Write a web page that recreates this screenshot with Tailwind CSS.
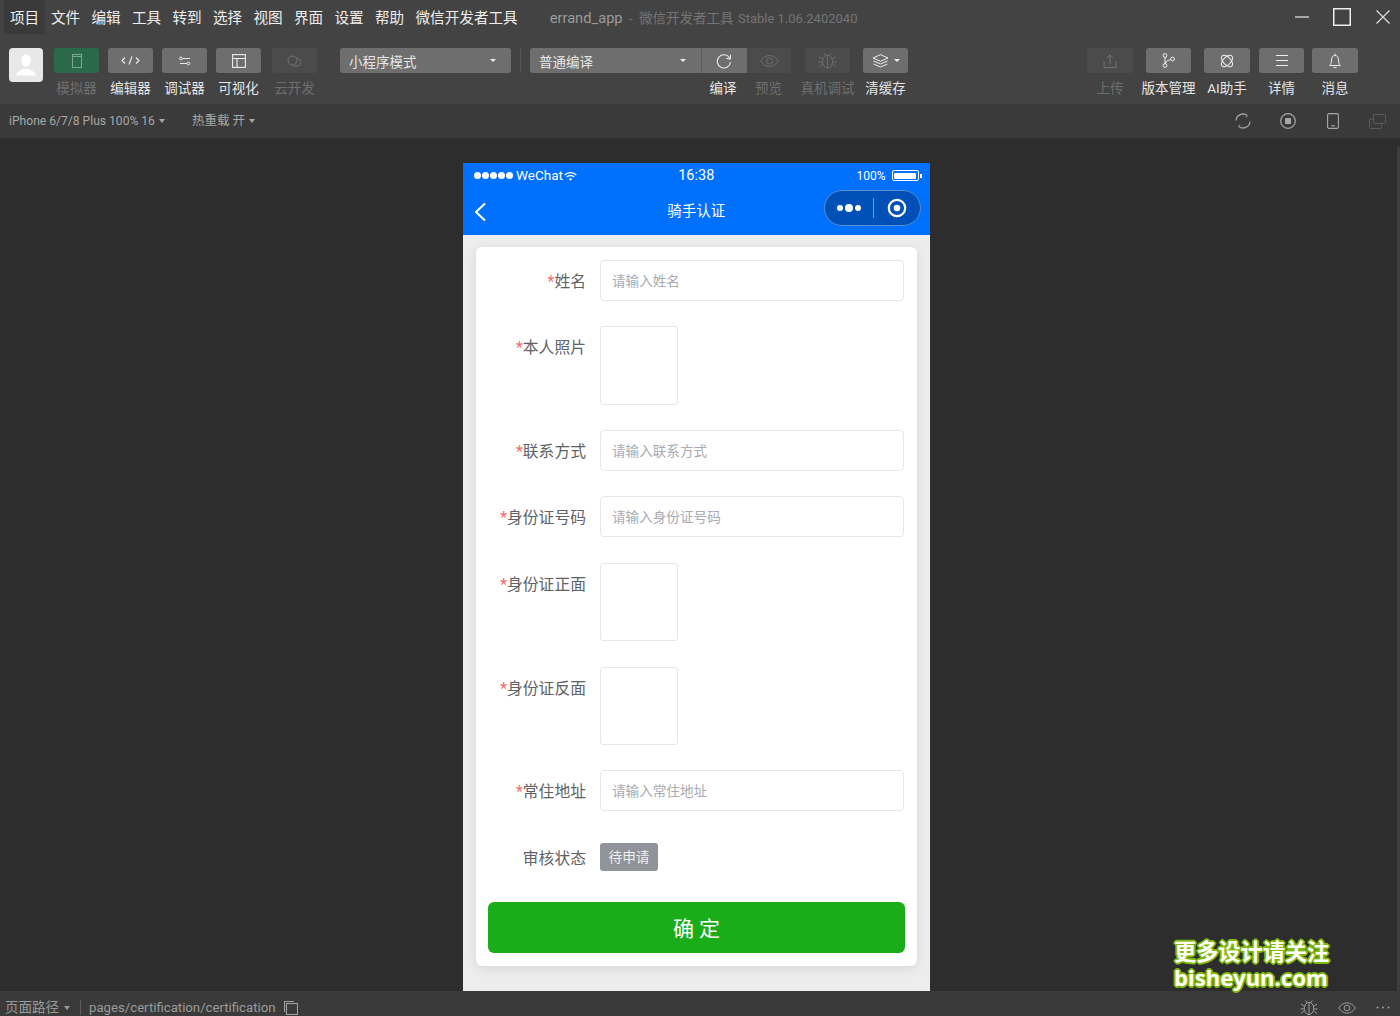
<!DOCTYPE html>
<html lang="zh">
<head>
<meta charset="utf-8">
<title>微信开发者工具</title>
<script src="https://cdn.jsdelivr.net/npm/@tailwindcss/browser@4"></script>
</head>
<body class="m-0 bg-[#2d2d2d]">
<div class="relative flex flex-col w-[1400px] h-[1016px] overflow-hidden bg-[#2d2d2d] font-['Roboto','Noto_Sans_CJK_SC',sans-serif]">

  <!-- top -->
  <header class="h-[104px] shrink-0 bg-[#434343]">
    <div class="flex items-center h-[34px] pl-[4px] text-[14.6px] text-[#efefef]">
      <div class="flex items-center justify-center w-[41px] h-[34px] pt-[3px] bg-[#3a3a3a]">项目</div>
      <div class="flex items-center gap-[11.3px] ml-[6px] pt-[3px]">
        <span>文件</span><span>编辑</span><span>工具</span><span>转到</span><span>选择</span><span>视图</span><span>界面</span><span>设置</span><span>帮助</span><span>微信开发者工具</span>
      </div>
      <div class="ml-[32px] pt-[2px] text-[#9a9a9a] text-[14.7px] whitespace-nowrap">errand_app</div>
      <div class="ml-[6px] pt-[2px] text-[#757575] text-[13.5px] whitespace-nowrap">-&nbsp; 微信开发者工具 <span class="ml-[1px] text-[13px]">Stable 1.06.2402040</span></div>
      <div class="ml-auto flex items-center h-[34px]">
        <svg class="w-[14px] h-[14px] mr-[24px]" viewBox="0 0 14 14"><path d="M0 7h14" stroke="#ddd" stroke-width="1.3"/></svg>
        <svg class="w-[18px] h-[18px] mr-[25px]" viewBox="0 0 18 18"><rect x=".75" y=".75" width="16.5" height="16.5" fill="none" stroke="#eee" stroke-width="1.5"/></svg>
        <svg class="w-[14px] h-[14px] mr-[10px]" viewBox="0 0 14 14"><path d="M.5.5l13 13M13.5.5l-13 13" stroke="#ddd" stroke-width="1.2"/></svg>
      </div>
    </div>

    <div class="flex items-start h-[70px] pt-[14px] pl-[9px] text-[13.5px] text-[#e6e6e6]">
      <div class="flex items-center justify-center w-[34px] h-[34px] rounded-[4px] bg-[#e8e8e8] overflow-hidden">
        <svg class="w-[22px] h-[22px]" viewBox="0 0 22 22" fill="#fff"><ellipse cx="11" cy="6.500" rx="4.800" ry="6.300"/><path d="M1 21.500c.5-4 5-5 7.500-6.500h5c2.500 1.500 7 2.500 7.500 6.500z"/></svg>
      </div>

      <div class="flex gap-[9px] ml-[11px]">
        <div class="flex flex-col items-center w-[45px]">
          <div class="flex items-center justify-center w-[45px] h-[25px] rounded-[3px] bg-[#2a6a4b]">
            <svg class="w-[10px] h-[14px]" viewBox="0 0 10 14" fill="none" stroke="#7fa892"><rect x=".5" y=".5" width="9" height="13"/><path d="M.5 2.500h9"/></svg>
          </div>
          <span class="mt-[5px] whitespace-nowrap text-[#6f6f6f]">模拟器</span>
        </div>
        <div class="flex flex-col items-center w-[45px]">
          <div class="flex items-center justify-center w-[45px] h-[25px] rounded-[3px] bg-[#6e6e6e]">
            <svg class="w-[19px] h-[9px]" viewBox="0 0 19 9" fill="none" stroke="#eee" stroke-width="1.1"><path d="M4 1.500L1 4.500l3 3M15 1.500l3 3-3 3M11 .5l-3 8"/></svg>
          </div>
          <span class="mt-[5px] whitespace-nowrap">编辑器</span>
        </div>
        <div class="flex flex-col items-center w-[45px]">
          <div class="flex items-center justify-center w-[45px] h-[25px] rounded-[3px] bg-[#6e6e6e]">
            <svg class="w-[12px] h-[10px]" viewBox="0 0 12 10" fill="none" stroke="#e8e8e8"><circle cx="2" cy="2.500" r="1.400"/><path d="M3.500 2.500H11"/><circle cx="9.500" cy="7.500" r="1.400"/><path d="M1 7.500H8"/></svg>
          </div>
          <span class="mt-[5px] whitespace-nowrap">调试器</span>
        </div>
        <div class="flex flex-col items-center w-[45px]">
          <div class="flex items-center justify-center w-[45px] h-[25px] rounded-[3px] bg-[#6e6e6e]">
            <svg class="w-[14px] h-[14px]" viewBox="0 0 14 14" fill="none" stroke="#eee" stroke-width="1.1"><rect x=".6" y=".6" width="12.800" height="12.800"/><path d="M.6 4.500h12.800M5 4.500v8.900"/></svg>
          </div>
          <span class="mt-[5px] whitespace-nowrap">可视化</span>
        </div>
        <div class="flex flex-col items-center w-[45px] ml-[2px]">
          <div class="flex items-center justify-center w-[45px] h-[25px] rounded-[3px] bg-[#4b4b4b]">
            <svg class="w-[16px] h-[12px]" viewBox="0 0 16 12" fill="none" stroke="#737373"><circle cx="5.500" cy="5.500" r="4.500"/><path d="M9 3.500a3.800 3.800 0 1 1 1.500 7.500H5.500"/></svg>
          </div>
          <span class="mt-[5px] whitespace-nowrap text-[#6f6f6f]">云开发</span>
        </div>
      </div>

      <div class="flex items-center justify-between w-[171px] h-[25px] ml-[23px] pl-[9px] pr-[15px] rounded-[3px] bg-[#6e6e6e] text-[13.500px]">
        <span class="pt-[3px]">小程序模式</span>
        <span class="w-0 h-0 border-x-[3px] border-x-transparent border-t-[3px] border-t-[#eee]"></span>
      </div>
      <div class="w-px h-[25px] ml-[9px] bg-[#555]"></div>

      <div class="flex flex-col items-start ml-[9px]">
        <div class="flex h-[25px]">
          <div class="flex items-center justify-between w-[172px] pl-[9px] pr-[15px] rounded-l-[3px] bg-[#6e6e6e] border-r border-r-[#5c5c5c] text-[13.500px]">
            <span class="pt-[3px]">普通编译</span>
            <span class="w-0 h-0 border-x-[3px] border-x-transparent border-t-[3px] border-t-[#eee]"></span>
          </div>
          <div class="flex items-center justify-center w-[45px] bg-[#6e6e6e]">
            <svg class="w-[16px] h-[16px] -ml-[2px]" viewBox="0 0 16 16" fill="none" stroke="#eee" stroke-width="1.1"><path d="M13.600 5A6.600 6.600 0 1 0 14.500 9"/><path d="M14.600 1.800L14.200 6 10.300 5.200"/></svg>
          </div>
          <div class="flex items-center justify-center w-[44px] rounded-r-[3px] bg-[#4b4b4b]">
            <svg class="w-[19px] h-[12px]" viewBox="0 0 19 12" fill="none" stroke="#707070"><path d="M.7 6C3 2.300 6 .6 9.500 .6S16 2.300 18.300 6C16 9.700 13 11.400 9.500 11.400S3 9.700.7 6z"/><circle cx="9.500" cy="6" r="3"/></svg>
          </div>
        </div>
        <div class="flex mt-[5px]">
          <span class="w-[44px] ml-[171px] text-center whitespace-nowrap">编译</span>
          <span class="w-[45px] ml-[1px] text-center whitespace-nowrap text-[#6f6f6f]">预览</span>
        </div>
      </div>

      <div class="flex flex-col items-center w-[45px] ml-[14px]">
        <div class="flex items-center justify-center w-[45px] h-[25px] rounded-[3px] bg-[#4b4b4b]">
          <svg class="w-[19px] h-[17px]" viewBox="0 0 19 17" fill="none" stroke="#707070"><ellipse cx="9.500" cy="9.500" rx="5" ry="6.500"/><path d="M9.500 3v13M6 1l1.500 2.500M13 1l-1.500 2.500M4.500 7L1 5M14.500 7L18 5M4.500 10H.5M14.500 10h4M4.500 12L1 15M14.500 12l3.500 3"/></svg>
        </div>
        <span class="mt-[5px] whitespace-nowrap text-[#6f6f6f]">真机调试</span>
      </div>
      <div class="flex flex-col items-center w-[45px] ml-[13px]">
        <div class="flex items-center justify-center gap-[5px] w-[45px] h-[25px] rounded-[3px] bg-[#6e6e6e]">
          <svg class="w-[17px] h-[14px]" viewBox="0 0 17 14" fill="none" stroke="#eee"><path d="M8.500 .7L16 4 8.500 7.300 1 4z"/><path d="M1.500 7l7 3 7-3M1.500 10l7 3 7-3"/></svg>
          <span class="w-0 h-0 border-x-[3px] border-x-transparent border-t-[3px] border-t-[#eee]"></span>
        </div>
        <span class="mt-[5px] whitespace-nowrap">清缓存</span>
      </div>

      <div class="flex ml-auto mr-[42px]">
        <div class="flex flex-col items-center w-[46px]">
          <div class="flex items-center justify-center w-[46px] h-[25px] rounded-[3px] bg-[#4b4b4b]">
            <svg class="w-[14px] h-[14px]" viewBox="0 0 14 14" fill="none" stroke="#737373"><path d="M7 10V1M3.800 4L7 1l3.200 3M1 7v6.500h12V7"/></svg>
          </div>
          <span class="mt-[5px] whitespace-nowrap text-[#6f6f6f]">上传</span>
        </div>
        <div class="flex flex-col items-center w-[45px] ml-[13px]">
          <div class="flex items-center justify-center w-[45px] h-[25px] rounded-[3px] bg-[#6e6e6e]">
            <svg class="w-[13px] h-[15px]" viewBox="0 0 13 15" fill="none" stroke="#eee"><circle cx="3" cy="2.500" r="1.900"/><circle cx="3" cy="12.500" r="1.900"/><circle cx="10.500" cy="6" r="1.900"/><path d="M3 4.400v6.200M8.700 6.500C6 7.500 4 8 3.300 10.600"/></svg>
          </div>
          <span class="mt-[5px] whitespace-nowrap">版本管理</span>
        </div>
        <div class="flex flex-col items-center w-[46px] ml-[13px]">
          <div class="flex items-center justify-center w-[46px] h-[25px] rounded-[3px] bg-[#6e6e6e]">
            <svg class="w-[14px] h-[14px]" viewBox="0 0 14 14" fill="none" stroke="#eee"><ellipse cx="7" cy="7" rx="3.800" ry="7" transform="rotate(45 7 7)"/><ellipse cx="7" cy="7" rx="3.800" ry="7" transform="rotate(-45 7 7)"/></svg>
          </div>
          <span class="mt-[5px] whitespace-nowrap">AI助手</span>
        </div>
        <div class="flex flex-col items-center w-[45px] ml-[9px]">
          <div class="flex items-center justify-center w-[45px] h-[25px] rounded-[3px] bg-[#6e6e6e]">
            <svg class="w-[12px] h-[11px]" viewBox="0 0 12 11" fill="none" stroke="#eee"><path d="M0 .5h12M0 5.500h12M0 10.500h12"/></svg>
          </div>
          <span class="mt-[5px] whitespace-nowrap">详情</span>
        </div>
        <div class="flex flex-col items-center w-[46px] ml-[8px]">
          <div class="flex items-center justify-center w-[46px] h-[25px] rounded-[3px] bg-[#6e6e6e]">
            <svg class="w-[12px] h-[16px]" viewBox="0 0 12 16" fill="none" stroke="#eee"><path d="M6 2.500C3.500 2.500 2.500 4.500 2.500 7c0 3-1 4.500-1.800 5.500h10.600C10.500 11.500 9.500 10 9.500 7c0-2.500-1-4.500-3.500-4.500zM6 .5v2M4.500 14.500h3"/></svg>
          </div>
          <span class="mt-[5px] whitespace-nowrap">消息</span>
        </div>
      </div>
    </div>
  </header>

  <!-- device bar -->
  <div class="flex items-center h-[34px] shrink-0 pl-[9px] bg-[#3a3a3a] text-[12.100px] text-[#a8a8a8]">
    <span class="whitespace-nowrap pt-[1px]">iPhone 6/7/8 Plus 100% 16</span>
    <span class="ml-[4px] w-0 h-0 border-x-[3.500px] border-x-transparent border-t-[4px] border-t-[#a8a8a8]"></span>
    <span class="ml-[27px] whitespace-nowrap pt-[1px] text-[12.500px]">热重载 开</span>
    <span class="ml-[4px] w-0 h-0 border-x-[3.500px] border-x-transparent border-t-[4px] border-t-[#a8a8a8]"></span>
    <div class="flex items-center ml-auto mr-[14px]">
      <svg class="w-[16px] h-[16px]" viewBox="0 0 16 16" fill="none" stroke="#a0a0a0" stroke-width="1.300"><path d="M1 7.500A7 7 0 0 1 11.500 2M15 8.500A7 7 0 0 1 4.500 14"/><path d="M10 1l2.500 1.500L11 4.500M6 15l-2.500-1.500L5 11.500" stroke-width="1"/></svg>
      <svg class="w-[16px] h-[16px] ml-[29px]" viewBox="0 0 16 16"><circle cx="8" cy="8" r="7.300" fill="none" stroke="#a8a8a8" stroke-width="1.200"/><rect x="5" y="5" width="6" height="6" rx="1" fill="#a8a8a8"/></svg>
      <svg class="w-[12px] h-[16px] ml-[31px]" viewBox="0 0 12 16" fill="none" stroke="#a8a8a8" stroke-width="1.100"><rect x=".6" y=".6" width="10.800" height="14.800" rx="1.500"/><path d="M4 12.800h4"/></svg>
      <svg class="w-[17px] h-[15px] ml-[30px]" viewBox="0 0 17 15" fill="none" stroke="#5a5a5a"><rect x="4.500" y=".5" width="12" height="9" rx="1"/><path d="M4 5H1.500a1 1 0 0 0-1 1v7.500a1 1 0 0 0 1 1h10a1 1 0 0 0 1-1V10"/></svg>
    </div>
  </div>

  <!-- simulator -->
  <main class="flex-1 flex justify-start pl-[463px] pt-[25px] min-h-0">
    <div class="flex flex-col w-[466.500px] h-[828px] bg-[#ededed] overflow-hidden">
      <div class="h-[72px] shrink-0 bg-[#0070ff] text-white">
        <div class="relative flex items-center h-[24px] pl-[11px] pr-[8px]">
          <span class="flex gap-[1.500px] mt-[1px]">
            <i class="block w-[6.500px] h-[6.500px] rounded-full bg-white"></i><i class="block w-[6.500px] h-[6.500px] rounded-full bg-white"></i><i class="block w-[6.500px] h-[6.500px] rounded-full bg-white"></i><i class="block w-[6.500px] h-[6.500px] rounded-full bg-white"></i><i class="block w-[6.500px] h-[6.500px] rounded-full bg-white"></i>
          </span>
          <span class="ml-[3.500px] mt-[1px] text-[13.500px]">WeChat</span>
          <svg class="w-[13px] h-[9px] ml-[1px] mt-[2px]" viewBox="0 0 13 9" fill="none" stroke="#fff" stroke-width="1.300"><path d="M.7 3a8.300 8.300 0 0 1 11.600 0M2.700 5a5.500 5.500 0 0 1 7.600 0"/><path d="M4.800 7a2.500 2.500 0 0 1 3.400 0L6.500 8.800z" fill="#fff" stroke="none"/></svg>
          <span class="absolute left-0 right-0 top-[2px] text-center text-[14.500px]">16:38</span>
          <span class="ml-auto mt-[2px] text-[12px]">100%</span>
          <span class="flex items-center ml-[6px] mt-[1px]">
            <span class="block w-[27px] h-[11px] p-[1.500px] border border-white rounded-[2px]"><span class="block w-full h-full bg-white rounded-[1px]"></span></span>
            <span class="block w-[2px] h-[4px] ml-[1px] bg-white"></span>
          </span>
        </div>
        <div class="relative flex items-center justify-center h-[48px]">
          <svg class="absolute left-[11px] top-[15px] w-[13px] h-[20px]" viewBox="0 0 13 20" fill="none" stroke="#fff" stroke-width="2"><path d="M11 1.500L2 10l9 8.500"/></svg>
          <span class="text-[14.500px] mt-[1px]">骑手认证</span>
          <div class="absolute right-[8.500px] top-[3px] flex items-center w-[97px] h-[36px] rounded-full bg-[#0050b8] border border-[#5b8ccc]">
            <span class="flex items-center justify-center gap-[2px] w-[48px]">
              <i class="block w-[6px] h-[6px] rounded-full bg-white"></i><i class="block w-[8px] h-[8px] rounded-full bg-white"></i><i class="block w-[6px] h-[6px] rounded-full bg-white"></i>
            </span>
            <span class="w-px h-[20px] bg-[#6f9bd6]"></span>
            <span class="flex justify-center flex-1">
              <svg class="w-[20px] h-[20px]" viewBox="0 0 20 20"><circle cx="10" cy="10" r="8.200" fill="none" stroke="#fff" stroke-width="2.200"/><circle cx="10" cy="10" r="3.300" fill="#fff"/></svg>
            </span>
          </div>
        </div>
      </div>

      <div class="flex-1 pl-[13px] pr-[12.500px] pt-[12px]">
        <div class="flex flex-col h-[719px] pt-[13px] px-[12px] rounded-[6px] bg-white shadow-[0_2px_12px_rgba(0,0,0,0.1)] text-[15.800px] text-[#606266]">
          <div class="flex">
            <div class="w-[98px] h-[41px] leading-[43px] text-right"><span class="text-[#f56c6c]">*</span>姓名</div>
            <div class="flex items-center w-[304px] h-[41px] ml-[14px] pl-[11px] pt-[1px] border border-[#e4e7ed] rounded-[4px] text-[13.600px] text-[#a8abb2]">请输入姓名</div>
          </div>
          <div class="flex mt-[25px]">
            <div class="w-[98px] h-[41px] leading-[44px] text-right"><span class="text-[#f56c6c]">*</span>本人照片</div>
            <div class="w-[78px] h-[79px] ml-[14px] border border-[#e4e7ed] rounded-[3px]"></div>
          </div>
          <div class="flex mt-[25px]">
            <div class="w-[98px] h-[41px] leading-[43px] text-right"><span class="text-[#f56c6c]">*</span>联系方式</div>
            <div class="flex items-center w-[304px] h-[41px] ml-[14px] pl-[11px] pt-[1px] border border-[#e4e7ed] rounded-[4px] text-[13.600px] text-[#a8abb2]">请输入联系方式</div>
          </div>
          <div class="flex mt-[25px]">
            <div class="w-[98px] h-[41px] leading-[43px] text-right"><span class="text-[#f56c6c]">*</span>身份证号码</div>
            <div class="flex items-center w-[304px] h-[41px] ml-[14px] pl-[11px] pt-[1px] border border-[#e4e7ed] rounded-[4px] text-[13.600px] text-[#a8abb2]">请输入身份证号码</div>
          </div>
          <div class="flex mt-[26px]">
            <div class="w-[98px] h-[41px] leading-[43px] text-right"><span class="text-[#f56c6c]">*</span>身份证正面</div>
            <div class="w-[78px] h-[78px] ml-[14px] border border-[#e4e7ed] rounded-[3px]"></div>
          </div>
          <div class="flex mt-[26px]">
            <div class="w-[98px] h-[41px] leading-[43px] text-right"><span class="text-[#f56c6c]">*</span>身份证反面</div>
            <div class="w-[78px] h-[78px] ml-[14px] border border-[#e4e7ed] rounded-[3px]"></div>
          </div>
          <div class="flex mt-[25px]">
            <div class="w-[98px] h-[41px] leading-[43px] text-right"><span class="text-[#f56c6c]">*</span>常住地址</div>
            <div class="flex items-center w-[304px] h-[41px] ml-[14px] pl-[11px] pt-[1px] border border-[#e4e7ed] rounded-[4px] text-[13.600px] text-[#a8abb2]">请输入常住地址</div>
          </div>
          <div class="flex mt-[32px]">
            <div class="w-[98px] h-[28px] leading-[32px] text-right">审核状态</div>
            <div class="flex items-center justify-center w-[58px] h-[28px] ml-[14px] pt-[1px] rounded-[3px] bg-[#909399] text-[13.600px] text-[#f0f0f0]">待申请</div>
          </div>
          <div class="flex items-center justify-center w-[417px] h-[51px] pt-[5px] mt-[31px] rounded-[6px] bg-[#1aad19] text-white text-[21px]">确 定</div>
        </div>
      </div>
    </div>
  </main>

  <!-- status -->
  <footer class="flex items-center h-[25px] shrink-0 pl-[5px] pt-[8px] bg-[#3a3a3a] text-[13.500px] text-[#9a9a9a]">
    <span class="whitespace-nowrap">页面路径</span>
    <span class="ml-[5px] w-0 h-0 border-x-[3px] border-x-transparent border-t-[4px] border-t-[#9a9a9a]"></span>
    <span class="w-px h-[15px] ml-[10px] bg-[#5c5c5c]"></span>
    <span class="ml-[8px] whitespace-nowrap text-[13.200px]">pages/certification/certification</span>
    <svg class="w-[14px] h-[14px] ml-[8px]" viewBox="0 0 14 14" fill="none" stroke="#a0a0a0" stroke-width="1.100"><rect x="2.500" y="2.500" width="11" height="11"/><path d="M.5 11V.5H10"/></svg>
    <div class="flex items-center ml-auto mr-[10px] gap-[20px]">
      <svg class="w-[18px] h-[17px]" viewBox="0 0 19 17" fill="none" stroke="#a0a0a0"><ellipse cx="9.500" cy="9.500" rx="5" ry="6.500"/><path d="M9.500 3v13M6 1l1.500 2.500M13 1l-1.500 2.500M4.500 7L1 5M14.500 7L18 5M4.500 10H.5M14.500 10h4M4.500 12L1 15M14.500 12l3.500 3"/></svg>
      <svg class="w-[18px] h-[12px]" viewBox="0 0 19 12" fill="none" stroke="#a0a0a0"><path d="M.7 6C3 2.300 6 .6 9.500 .6S16 2.300 18.300 6C16 9.700 13 11.400 9.500 11.400S3 9.700.7 6z"/><circle cx="9.500" cy="6" r="3"/></svg>
      <svg class="w-[14px] h-[3px]" viewBox="0 0 14 3" fill="#a0a0a0"><circle cx="1.500" cy="1.500" r="1"/><circle cx="7" cy="1.500" r="1"/><circle cx="12.500" cy="1.500" r="1"/></svg>
    </div>
  </footer>

  <!-- simulator scrollbar -->
  <div class="absolute right-0 top-[147px] bottom-[25px] w-[3px] bg-[#3d3d3d]"></div>

  <!-- watermark -->
  <div class="absolute left-[1174px] top-[939px] w-[160px] font-['Noto_Sans','Noto_Sans_CJK_SC',sans-serif] text-white font-bold text-[22.200px] leading-[26px] whitespace-nowrap [text-shadow:1px_1px_0_#7fb80e,-1px_-1px_0_#7fb80e,1px_-1px_0_#7fb80e,-1px_1px_0_#7fb80e,0_2px_0_#7fb80e,2px_0_0_#7fb80e,-2px_0_0_#7fb80e,0_-2px_0_#7fb80e]">
    <div>更多设计请关注</div>
    <div>bisheyun.com</div>
  </div>
</div>
</body>
</html>
